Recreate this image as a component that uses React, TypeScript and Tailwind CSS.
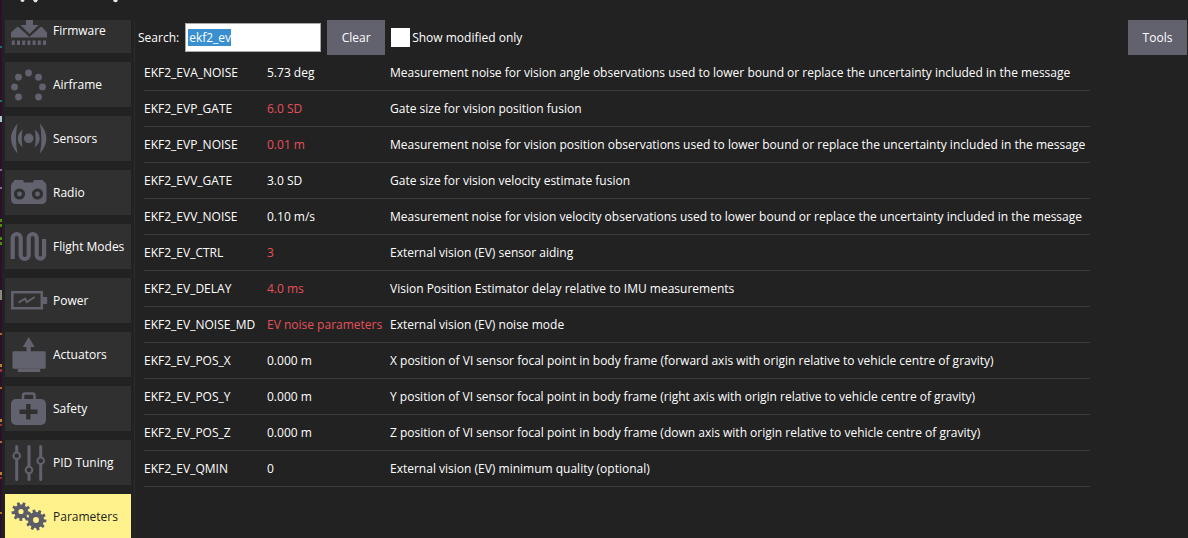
import React from "react";

const ICON = "#62626f";
const BTN = "#303030";

function gearPath(cx: number, cy: number, outer: number, inner: number, hole: number, teeth: number, rot = 0) {
  const pts: string[] = [];
  const step = (Math.PI * 2) / teeth;
  for (let i = 0; i < teeth; i++) {
    const a = i * step + rot;
    const w = step * 0.2;
    const list: [number, number][] = [
      [inner, a - step * 0.32],
      [outer, a - w],
      [outer, a + w],
      [inner, a + step * 0.32],
    ];
    for (const [r, t] of list) pts.push(`${(cx + r * Math.cos(t)).toFixed(2)},${(cy + r * Math.sin(t)).toFixed(2)}`);
  }
  const h = `M${cx - hole},${cy}a${hole},${hole} 0 1,0 ${hole * 2},0a${hole},${hole} 0 1,0 ${-hole * 2},0z`;
  return `M${pts.join("L")}z${h}`;
}

const Svg = ({ h = 45, children }: { h?: number; children: React.ReactNode }) => (
  <svg width="40" height={h} viewBox={`0 0 40 ${h}`} className="ml-[5px] shrink-0">
    {children}
  </svg>
);

const icons: Record<string, React.ReactNode> = {
  Firmware: (
    <Svg h={33}>
      <path fill={ICON} d="M16 0h7v5h5.500L19.500 14 10.500 5H16z" />
      <path fill={ICON} d="M1 17.500v-5L7 7h1.500l11 10 11-10H32l5 5.500v5z" />
      {[1, 6.200, 11.400, 16.600, 21.800, 27, 32.200].map((x) => (
        <rect key={x} x={x + 0.8} y="20.500" width="3" height="4.500" fill={ICON} />
      ))}
    </Svg>
  ),
  Airframe: (
    <Svg>
      {[
        [18.500, 11],
        [28.500, 15.200],
        [32.500, 25],
        [28.500, 35],
        [8.500, 35],
        [4.500, 25],
        [8.500, 15.200],
      ].map(([x, y]) => (
        <circle key={`${x}-${y}`} cx={x} cy={y} r="3.400" fill={ICON} />
      ))}
    </Svg>
  ),
  Sensors: (
    <Svg>
      <circle cx="18.700" cy="22.300" r="4.800" fill={ICON} />
      <path
        fill={ICON}
        d="M7.500 7.500Q-5.500 22.500 7.500 37.500Q4.500 22.500 7.500 7.500zM29.900 7.500Q42.900 22.500 29.900 37.500Q32.900 22.500 29.900 7.500zM12.500 13.500Q3 22.500 12.500 31.500Q11 22.500 12.500 13.500zM24.900 13.500Q34.400 22.500 24.900 31.500Q26.400 22.500 24.900 13.500z"
      />
    </Svg>
  ),
  Radio: (
    <Svg>
      <path
        fill={ICON}
        d="M1 17c0-3 1-5 3-5.500L4 10h9l1 2.500h9l1-2.500h9l.500 1.500c2 .5 3 2.500 3 5.500v12c0 3-2 5-5 5H6c-3 0-5-2-5-5z"
      />
      <circle cx="9.500" cy="24" r="5.600" fill={BTN} />
      <circle cx="9.500" cy="24" r="2.400" fill={ICON} />
      <circle cx="27.500" cy="24" r="5.600" fill={BTN} />
      <circle cx="27.500" cy="24" r="2.400" fill={ICON} />
    </Svg>
  ),
  "Flight Modes": (
    <Svg>
      <path
        fill="none"
        stroke={ICON}
        strokeWidth="4.200"
        d="M2.700 35V14a4 4 0 0 1 8 0v17a4 4 0 0 0 8 0V14a4 4 0 0 1 8 0v17a3.700 3.700 0 0 0 7.400 0V15"
      />
    </Svg>
  ),
  Power: (
    <Svg>
      <rect x="2.300" y="14.200" width="29.500" height="16" fill="none" stroke={ICON} strokeWidth="2.500" />
      <rect x="33" y="19" width="4.200" height="7" fill={ICON} />
      <path fill="none" stroke={ICON} strokeWidth="2" d="M8.500 24.700l6.500-4 1.800 3.300 8-5" />
    </Svg>
  ),
  Actuators: (
    <Svg>
      <path fill={ICON} d="M18.700 5l6 10h-3.900v5h-4.300v-5h-3.800z" />
      <path fill={ICON} d="M3.500 19.300h31.200q1 0 1 1v15.400q0 1-1 1H3.500q-1 0-1-1V20.300q0-1 1-1z" />
      <rect x="7.700" y="36.700" width="22.500" height="3.300" fill={ICON} />
    </Svg>
  ),
  Safety: (
    <Svg>
      <path fill="none" stroke={ICON} strokeWidth="2.500" d="M13 14V9.500q0-2 2-2h7.500q2 0 2 2V14" />
      <rect x="1" y="13" width="35" height="26" rx="5" fill={ICON} />
      <path fill={BTN} d="M16.200 18h4.300v5.600H27.500v4.300h-7v5.600h-4.300v-5.600H9.500v-4.300h6.700z" />
    </Svg>
  ),
  "PID Tuning": (
    <Svg>
      {[
        [6.700, 15.700],
        [19, 30],
        [30.700, 20.700],
      ].map(([x, y]) => (
        <g key={x}>
          <rect x={x - 1.500} y="5" width="3" height="36" rx="1.500" fill={ICON} />
          <circle cx={x} cy={y} r="3.300" fill={BTN} stroke={ICON} strokeWidth="2" />
        </g>
      ))}
    </Svg>
  ),
  Parameters: (
    <Svg>
      <path fill="#5c5c68" fillRule="evenodd" d={gearPath(11, 17.500, 9.500, 7, 2.600, 9, 0.2)} />
      <path fill="#5c5c68" fillRule="evenodd" d={gearPath(26, 26, 10.500, 8, 3, 10, 0.1)} />
    </Svg>
  ),
};

const nav = ["Airframe", "Sensors", "Radio", "Flight Modes", "Power", "Actuators", "Safety", "PID Tuning"];

const rows: [string, string, boolean, string][] = [
  ["EKF2_EVA_NOISE", "5.73 deg", false, "Measurement noise for vision angle observations used to lower bound or replace the uncertainty included in the message"],
  ["EKF2_EVP_GATE", "6.0 SD", true, "Gate size for vision position fusion"],
  ["EKF2_EVP_NOISE", "0.01 m", true, "Measurement noise for vision position observations used to lower bound or replace the uncertainty included in the message"],
  ["EKF2_EVV_GATE", "3.0 SD", false, "Gate size for vision velocity estimate fusion"],
  ["EKF2_EVV_NOISE", "0.10 m/s", false, "Measurement noise for vision velocity observations used to lower bound or replace the uncertainty included in the message"],
  ["EKF2_EV_CTRL", "3", true, "External vision (EV) sensor aiding"],
  ["EKF2_EV_DELAY", "4.0 ms", true, "Vision Position Estimator delay relative to IMU measurements"],
  ["EKF2_EV_NOISE_MD", "EV noise parameters", true, "External vision (EV) noise mode"],
  ["EKF2_EV_POS_X", "0.000 m", false, "X position of VI sensor focal point in body frame (forward axis with origin relative to vehicle centre of gravity)"],
  ["EKF2_EV_POS_Y", "0.000 m", false, "Y position of VI sensor focal point in body frame (right axis with origin relative to vehicle centre of gravity)"],
  ["EKF2_EV_POS_Z", "0.000 m", false, "Z position of VI sensor focal point in body frame (down axis with origin relative to vehicle centre of gravity)"],
  ["EKF2_EV_QMIN", "0", false, "External vision (EV) minimum quality (optional)"],
];

const specks: [number, number, string][] = [
  [46, 2, "#1f6f78"],
  [100, 2, "#1f6f78"],
  [116, 6, "#a8c8d0"],
  [169, 2, "#8a6a9a"],
  [187, 2, "#8a6a9a"],
  [219, 3, "#4f8f10"],
  [224, 3, "#4f8f10"],
  [237, 3, "#4f8f10"],
  [242, 3, "#4f8f10"],
  [290, 10, "#8a8a80"],
  [333, 2, "#b8682a"],
  [364, 3, "#c8782a"],
  [369, 3, "#a03030"],
  [387, 2, "#b8682a"],
  [419, 3, "#c8782a"],
  [424, 2, "#a03030"],
  [441, 2, "#b8682a"],
  [472, 3, "#c8782a"],
  [477, 2, "#a03030"],
  [512, 2, "#b8682a"],
];

function NavButton({ label, active, h = 45 }: { label: string; active?: boolean; h?: number }) {
  return (
    <div
      className={`flex items-center shrink-0 w-[126px] ${h === 45 ? "h-[45px]" : "h-[33px]"} ${
        active ? "bg-[#fff28d] text-[#222222]" : "bg-[#303030] text-white"
      }`}
    >
      {icons[label]}
      <span className={`ml-[3px] whitespace-nowrap ${h === 33 ? "-mt-[13px]" : ""}`}>{label}</span>
    </div>
  );
}

export default function App() {
  return (
    <div
      className="relative w-[1188px] h-[538px] overflow-hidden bg-[#222222] text-white text-[12px] leading-[17px] flex flex-col"
      style={{ fontFamily: '"Open Sans", "Noto Sans", sans-serif' }}
    >
      <div className="absolute left-0 top-0 w-[2px] h-full bg-[#2a1029]">
        {specks.map(([top, height, color]) => (
          <div key={top} className="absolute left-0 w-[2px]" style={{ top, height, backgroundColor: color }} />
        ))}
      </div>

      <div className="h-[20px] shrink-0">
        <svg width="130" height="4" viewBox="0 0 130 4" className="block">
          <circle cx="22.500" cy="0" r="2" fill="#e8e8e8" />
          <path d="M33 0h5l-1.500 2.200h-2z" fill="#e8e8e8" />
          <circle cx="115.500" cy="0" r="2.300" fill="#e8e8e8" />
        </svg>
      </div>

      <div className="flex flex-1 min-h-0">
        <div className="flex flex-col gap-[9px] w-[135px] shrink-0 pl-[5px] border-r border-[#2c2c2c] overflow-hidden">
          <NavButton label="Firmware" h={33} />
          {nav.map((n) => (
            <NavButton key={n} label={n} />
          ))}
          <NavButton label="Parameters" active />
        </div>

        <div className="flex-1 min-w-0 pl-[3px] flex flex-col">
          <div className="flex items-center h-[35px] shrink-0">
            <span>Search:</span>
            <div className="ml-[6px] w-[136px] h-[29px] bg-white border border-[#a8a8a8] flex items-center pl-[2px]">
              <span className="bg-[#3a8fd0] text-white pl-px">ekf2_ev</span>
            </div>
            <div className="ml-[6px] w-[58px] h-[35px] bg-[#62626f] flex items-center justify-center">Clear</div>
            <div className="ml-[6px] w-[19px] h-[19px] bg-white" />
            <span className="ml-[2px]">Show modified only</span>
            <div className="ml-auto mr-px w-[59px] h-[35px] bg-[#62626f] flex items-center justify-center">Tools</div>
          </div>

          <div className="pl-[6px] w-[952px]">
            {rows.map(([name, value, mod, desc]) => (
              <div key={name} className="flex items-center h-[36px] border-b border-[#3a3a3a] whitespace-nowrap">
                <div className="w-[123px] shrink-0">{name}</div>
                <div className={`w-[123px] shrink-0 ${mod ? "text-[#e5505a]" : ""}`}>{value}</div>
                <div>{desc}</div>
              </div>
            ))}
          </div>
        </div>
      </div>
    </div>
  );
}
